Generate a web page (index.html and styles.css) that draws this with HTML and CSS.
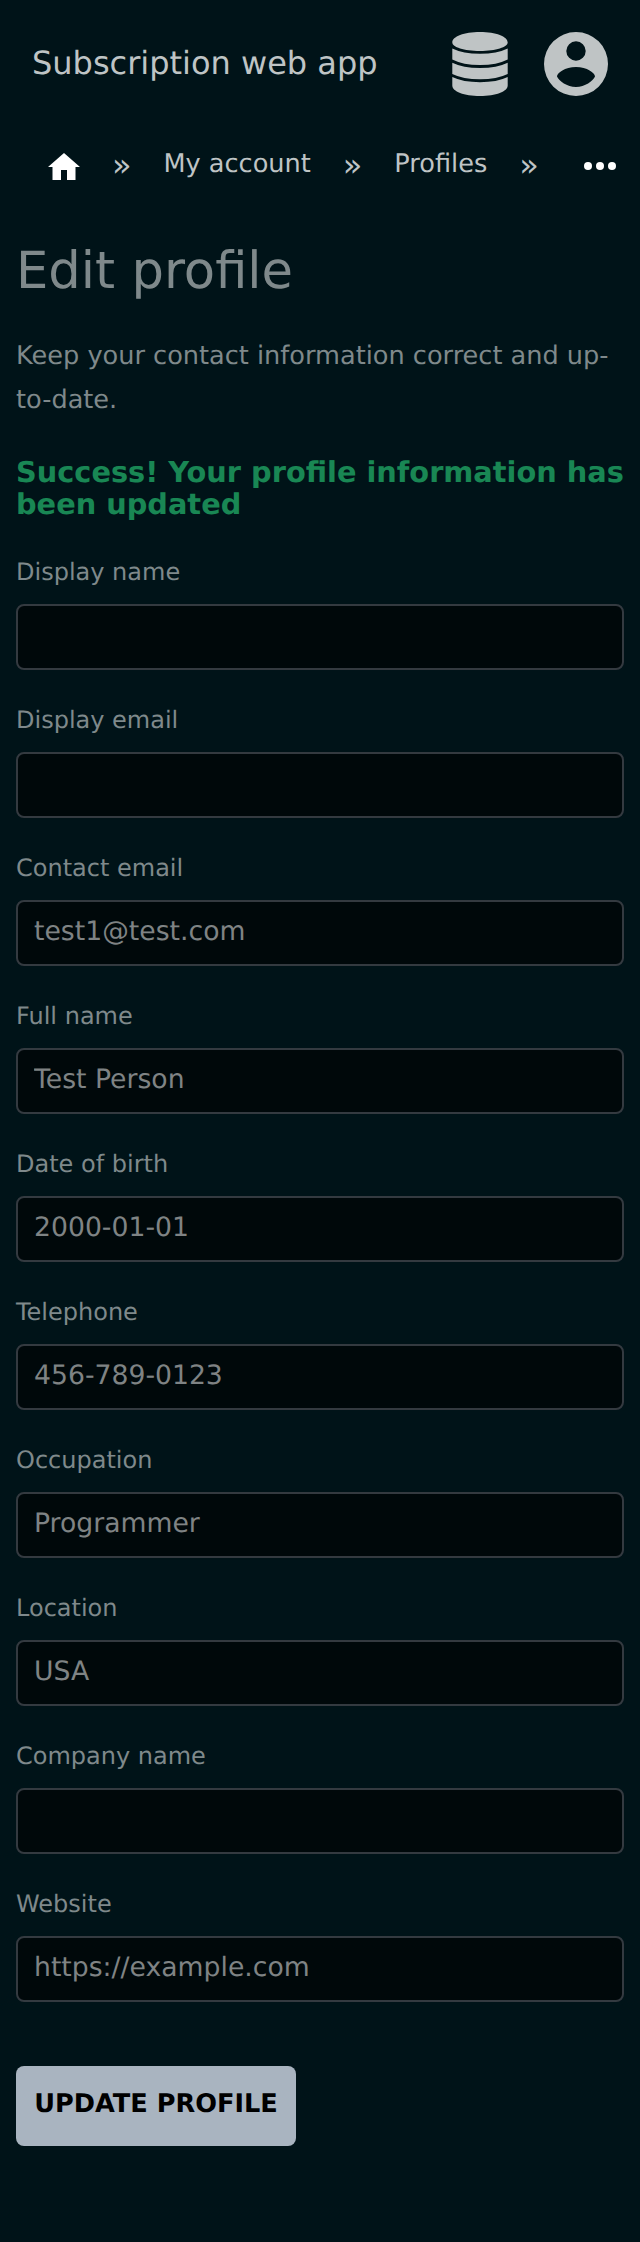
FILE: index.html
```html
<!DOCTYPE html>
<html lang="en">
<head>
<meta charset="utf-8">
<title>Edit profile</title>
<link rel="stylesheet" href="styles.css">
</head>
<body>
<header class="topbar">
  <span class="brand">Subscription web app</span>
  <svg class="icon-db" viewBox="0 0 56 64"><path d="M.300 10.500C.300 4.500 12 0 28 0s27.700 4.500 27.700 10.500C55.700 15 44 19 28 19S.300 15 .300 10.500zM.300 16.500Q11 21.800 28 21.800T55.700 16.500V27.500Q45 33 28 33T.300 27.500zM.300 30.700Q11 36 28 36T55.700 30.700V42Q45 47.300 28 47.300T.300 42zM.300 45Q11 50.200 28 50.200T55.700 45V53.500C55.700 59.500 44 64 28 64S.300 59.500 .300 53.500z"/></svg>
  <svg class="icon-user" viewBox="0 0 64 64"><path fill-rule="evenodd" d="M32 0a32 32 0 1 0 0 64 32 32 0 0 0 0-64zM32 9.300a9.700 9.700 0 1 1 0 19.400 9.700 9.700 0 0 1 0-19.400zM32 35C43 35 51 41 51 44.500C49 49 41 55 32 55S15 49 13 44.500C13 41 21 35 32 35z"/></svg>
</header>
<nav class="crumbs">
  <svg class="home" viewBox="0 0 32 28"><path d="M16 0L32 14H27.500V27H19V17H13V27H4.500V14H0z"/></svg>
  <span class="sep">»</span>
  <a class="crumb">My account</a>
  <span class="sep">»</span>
  <a class="crumb">Profiles</a>
  <span class="sep">»</span>
  <svg class="more" viewBox="0 0 32 8"><circle cx="4" cy="4" r="4"/><circle cx="16" cy="4" r="4"/><circle cx="28" cy="4" r="4"/></svg>
</nav>
<main class="page">
  <h1 class="title">Edit profile</h1>
  <p class="lead">Keep your contact information correct and up-to-date.</p>
  <h2 class="success">Success! Your profile information has been updated</h2>
  <form class="form">
    <label class="field">Display name<input class="input" type="text"></label>
    <label class="field">Display email<input class="input" type="text"></label>
    <label class="field">Contact email<input class="input" type="text" value="test1@test.com"></label>
    <label class="field">Full name<input class="input" type="text" value="Test Person"></label>
    <label class="field">Date of birth<input class="input" type="text" value="2000-01-01"></label>
    <label class="field">Telephone<input class="input" type="text" value="456-789-0123"></label>
    <label class="field">Occupation<input class="input" type="text" value="Programmer"></label>
    <label class="field">Location<input class="input" type="text" value="USA"></label>
    <label class="field">Company name<input class="input" type="text"></label>
    <label class="field">Website<input class="input" type="text" value="https://example.com"></label>
    <button class="submit" type="button">UPDATE PROFILE</button>
  </form>
</main>
</body>
</html>
```
FILE: styles.css
```css
* { box-sizing: border-box; }
body {
  margin: 0;
  min-height: 2242px;
  background: #001318;
  color: #7f898b;
  font-family: "DejaVu Sans", sans-serif;
  text-rendering: geometricPrecision;
}
.topbar {
  display: flex;
  align-items: center;
  height: 128px;
  padding: 0 32px;
  color: #bfc4c5;
}
.brand { flex: 1; font-size: 32px; line-height: 40px; padding-bottom: 2px; }
.icon-db { width: 56px; height: 64px; margin-right: 36px; fill: #bfc4c5; }
.icon-user { width: 64px; height: 64px; fill: #bfc4c5; }
.crumbs {
  display: flex;
  align-items: center;
  height: 72px;
  padding: 0 24px 0 48px;
  color: #bfc4c5;
}
.home { width: 32px; height: 28px; margin-top: 6px; fill: #fff; }
.more { width: 32px; height: 8px; margin: 4px 0 0 auto; fill: #fff; }
.sep { width: 83.5px; text-align: center; font-size: 32px; line-height: 40px; margin-top: 2px; }
.crumb { font-size: 25.6px; line-height: 40px; margin-top: 0; }
.page { padding: 35px 16px 0; }
.title { margin: 0; font-size: 51.2px; line-height: 72px; font-weight: 400; }
.lead { margin: 27px 0 0; font-size: 25.6px; line-height: 44px; }
.success { margin: 34px 0 0; font-size: 28.8px; line-height: 32px; font-weight: 700; color: #198754; }
.form { display: flex; flex-direction: column; margin-top: 36px; }
.field { display: flex; flex-direction: column; height: 148px; font-size: 24px; line-height: 32px; }
.input {
  width: 100%;
  height: 66px;
  margin: 16px 0 0;
  padding: 0 16px 4px;
  border: 2px solid #343a40;
  border-radius: 8px;
  background: #00080a;
  color: #7f8384;
  font: 26.667px "DejaVu Sans", sans-serif;
  text-rendering: inherit;
}
.submit {
  width: 280px;
  height: 80px;
  margin-top: 30px;
  padding: 0 0 4px;
  border: 0;
  border-radius: 8px;
  background: #a9b4c0;
  color: #000;
  font: 700 25.6px "DejaVu Sans", sans-serif;
  text-rendering: inherit;
}
```
